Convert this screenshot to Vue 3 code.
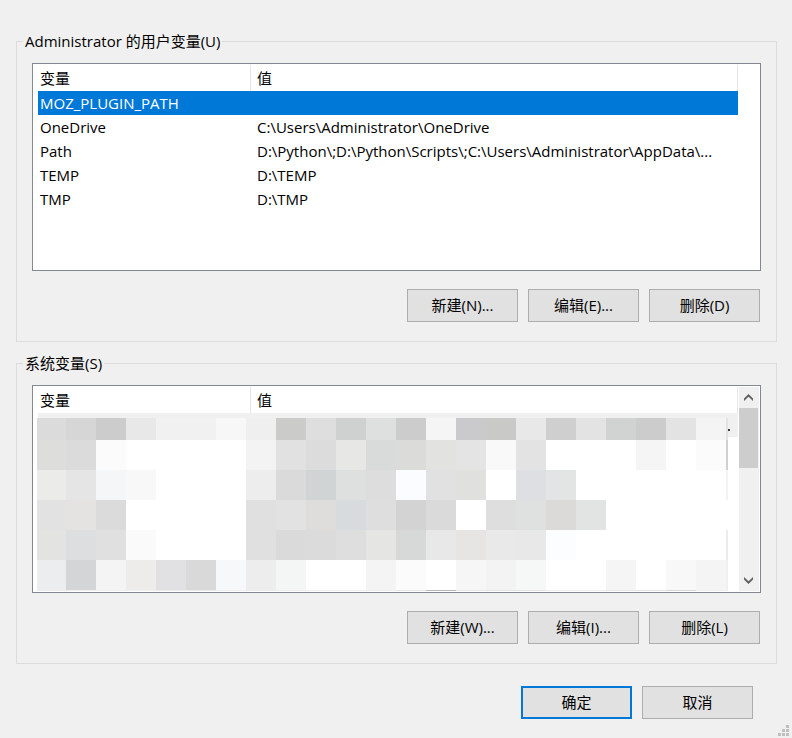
<script setup>
import { ref } from 'vue'

const userVariables = [
  { name: 'MOZ_PLUGIN_PATH', value: '' },
  { name: 'OneDrive', value: 'C:\\Users\\Administrator\\OneDrive' },
  { name: 'Path', value: 'D:\\Python\\;D:\\Python\\Scripts\\;C:\\Users\\Administrator\\AppData\\...' },
  { name: 'TEMP', value: 'D:\\TEMP' },
  { name: 'TMP', value: 'D:\\TMP' },
]
const selected = ref('MOZ_PLUGIN_PATH')

// Colours of the mosaic that hides the system entries; "-" is white.
const mosaicRows = [
  'dbdbdb d6d6d6 cccccc e8e8e8 f1f1f1 f1f1f1 f7f7f7 efefef cbcbc9 dedede ced1d0 dde0df cccccc f5f5f5 cacacc c9c9c8 e8e8e8 cfcfcf e3e3e3 d0d3d2 cccccc e3e3e3 f4f4f4 e2e2e2',
  'dddedc dbdbdb fbfbfb - - - - f3f3f3 e1e1e1 dcdcdc e7e7e5 d8dbda dbdbd9 e2e2e0 e4e4e4 f9f9f9 e3e3e3 - - - f5f5f5 - fbfbfb d0d0d0',
  'ebebe9 e5e5e5 f4f6f8 f8f8f8 - - - ededed dadada d0d4d5 dde0df dddddd fafcff e1e1e1 e0e0de - dddfe2 e2e5e4 - - - - - f3f3f3',
  'e2e2e2 e4e3e1 dbdbdb - - - - e0e0e0 e2e2e2 dfdddb d7dbdd dedede d3d3d3 dadada - dedede dee1e0 dcdad9 e2e4e3 - - - - -',
  'e3e3e1 dcdee0 e0e0e0 fafafa - - - e0e0e0 dadada dbdbdb dedede e5e5e3 d6d9d8 e8e8e8 e7e5e4 e9e9e9 e8e8e8 fcfdff - - - - - ebebeb',
  'ebedef d3d5d7 f4f4f4 edecea e1e1e3 d9d9d9 f6f8fa ededed f4f6f5 - - f4f4f4 fbfbfb - f6f6f6 f3f3f3 f6f8f7 - - f5f5f5 - f8f8f8 f4f4f4 efefef',
  'ededed ededed f0f0f0 f0f0f0 ececec ececec f0f0f0 ececec eeeeee f0f0f0 f0f0f0 eeeeee e6e6e6 b8b8b8 e8e8e8 e4e4e4 e4e4e4 efefef efefef e8e8e8 e4e4e4 d8d8d8 f0f0f0 f0f0f0',
]
const rowEdges = [5, 27, 57, 87, 117, 147, 177, 178]
const columnEdge = (i) => (i === 0 ? -1 : i === 24 ? 690 : 28 + (i - 1) * 30)

const tiles = mosaicRows.flatMap((row, r) =>
  row.split(' ').map((colour, c) => ({
    key: `${r}-${c}`,
    x: columnEdge(c),
    y: rowEdges[r],
    width: columnEdge(c + 1) - columnEdge(c),
    height: rowEdges[r + 1] - rowEdges[r],
    fill: colour === '-' ? '#ffffff' : `#${colour}`,
  })),
)
</script>

<template>
  <main class="dialog">
    <fieldset class="group">
      <legend>Administrator 的用户变量(U)</legend>
      <div class="list">
        <table class="variables">
          <thead>
            <tr><th scope="col" class="name">变量</th><th scope="col">值</th></tr>
          </thead>
          <tbody>
            <tr
              v-for="item in userVariables"
              :key="item.name"
              :class="{ selected: item.name === selected }"
              @click="selected = item.name"
            >
              <td class="name">{{ item.name }}</td>
              <td>{{ item.value }}</td>
            </tr>
          </tbody>
        </table>
      </div>
      <div class="actions">
        <button type="button">新建(N)...</button>
        <button type="button">编辑(E)...</button>
        <button type="button">删除(D)</button>
      </div>
    </fieldset>

    <fieldset class="group">
      <legend>系统变量(S)</legend>
      <div class="list scrolling">
        <table class="variables">
          <thead>
            <tr><th scope="col" class="name">变量</th><th scope="col">值</th></tr>
          </thead>
          <tbody>
            <tr>
              <td colspan="2" class="hidden-entries">
                <svg class="mosaic" viewBox="0 0 700 178" preserveAspectRatio="none" shape-rendering="crispEdges" aria-hidden="true">
                  <rect width="700" height="24" fill="#f0f0f0" />
                  <rect
                    v-for="tile in tiles"
                    :key="tile.key"
                    :x="tile.x"
                    :y="tile.y"
                    :width="tile.width"
                    :height="tile.height"
                    :fill="tile.fill"
                  />
                  <rect x="690" y="16" width="1" height="2" fill="#6b1d08" />
                  <rect x="691" y="16" width="1" height="2" fill="#12507f" />
                </svg>
              </td>
            </tr>
          </tbody>
        </table>
        <div class="scrollbar">
          <button type="button" class="arrow" aria-label="向上滚动">
            <svg viewBox="0 0 20 21" width="20" height="21" aria-hidden="true">
              <path d="M5 11.5 9.5 7 14 11.5V14L9.5 9.8 5 14Z" fill="#606060" />
            </svg>
          </button>
          <div class="thumb"></div>
          <button type="button" class="arrow bottom" aria-label="向下滚动">
            <svg viewBox="0 0 20 21" width="20" height="21" aria-hidden="true">
              <path d="M5 7V9.5L9.5 14 14 9.5V7L9.5 11.2Z" fill="#606060" />
            </svg>
          </button>
        </div>
      </div>
      <div class="actions">
        <button type="button">新建(W)...</button>
        <button type="button">编辑(I)...</button>
        <button type="button">删除(L)</button>
      </div>
    </fieldset>

    <div class="footer">
      <button type="button" class="default">确定</button>
      <button type="button">取消</button>
    </div>
    <svg class="grip" viewBox="0 0 11 11" width="11" height="11" fill="#bfbfbf" shape-rendering="crispEdges" aria-hidden="true">
      <path d="M8 0h3v3H8zM4 4h3v3H4zM8 4h3v3H8zM0 8h3v3H0zM4 8h3v3H4zM8 8h3v3H8z" />
    </svg>
  </main>
</template>

<style>
body {
  background: #f0f0f0;
}
</style>

<style scoped>
.dialog {
  box-sizing: border-box;
  min-height: 100vh;
  padding: 31px 15px 0 16px;
  display: flex;
  flex-direction: column;
  background: #f0f0f0;
  color: #000;
  font: 15px/20px "Open Sans", "Noto Sans CJK SC", sans-serif;
}

.group {
  min-width: 0;
  margin: 0 0 11px;
  padding: 12px 15px 19px;
  border: 1px solid #dcdcdc;
}

legend {
  margin-left: -9px;
  padding: 0 2px;
  height: 20px;
}

.list {
  box-sizing: border-box;
  min-height: 208px;
  padding: 1px 22px 0 5px;
  background: #fff;
  border: 1px solid #828790;
}

.scrolling {
  display: flex;
  padding: 1px 1px 1px 5px;
}

.variables {
  width: 100%;
  table-layout: fixed;
  border-collapse: separate;
  border-spacing: 0;
}

.variables th,
.variables td {
  box-sizing: border-box;
  height: 24px;
  padding: 0 0 0 6px;
  text-align: left;
  font-weight: 400;
  white-space: nowrap;
  overflow: hidden;
}

.variables th {
  height: 26px;
  border-right: 1px solid #e5e5e5;
}

.variables .name {
  width: 213px;
  padding-left: 2px;
}

.selected {
  background: #0078d7;
  color: #fff;
}

.variables .hidden-entries {
  height: 178px;
  padding: 0;
  overflow: visible;
}

.mosaic {
  display: block;
  width: 100%;
  height: 178px;
  overflow: visible;
}

.scrollbar {
  flex: none;
  display: flex;
  flex-direction: column;
  width: 20px;
  margin-left: 1px;
  background: #f0f0f0;
}

.arrow {
  width: 20px;
  height: 21px;
  padding: 0;
  border: 0;
  background: none;
}

.arrow svg {
  display: block;
}

.bottom {
  margin-top: auto;
}

.thumb {
  width: 19px;
  height: 60px;
  background: #cdcdcd;
}

.actions,
.footer {
  display: flex;
  justify-content: flex-end;
  gap: 10px;
}

.actions {
  margin-top: 18px;
  padding-right: 1px;
}

.footer {
  margin-top: 11px;
  padding-right: 24px;
}

.actions button,
.footer button {
  box-sizing: border-box;
  width: 111px;
  height: 33px;
  padding: 0 0 2px;
  border: 1px solid #adadad;
  border-radius: 0;
  background: #e1e1e1;
  color: #000;
  font: inherit;
}

.footer .default {
  border: 2px solid #0078d7;
}

.grip {
  align-self: flex-end;
  margin: 6px -12px 0 0;
}
</style>
